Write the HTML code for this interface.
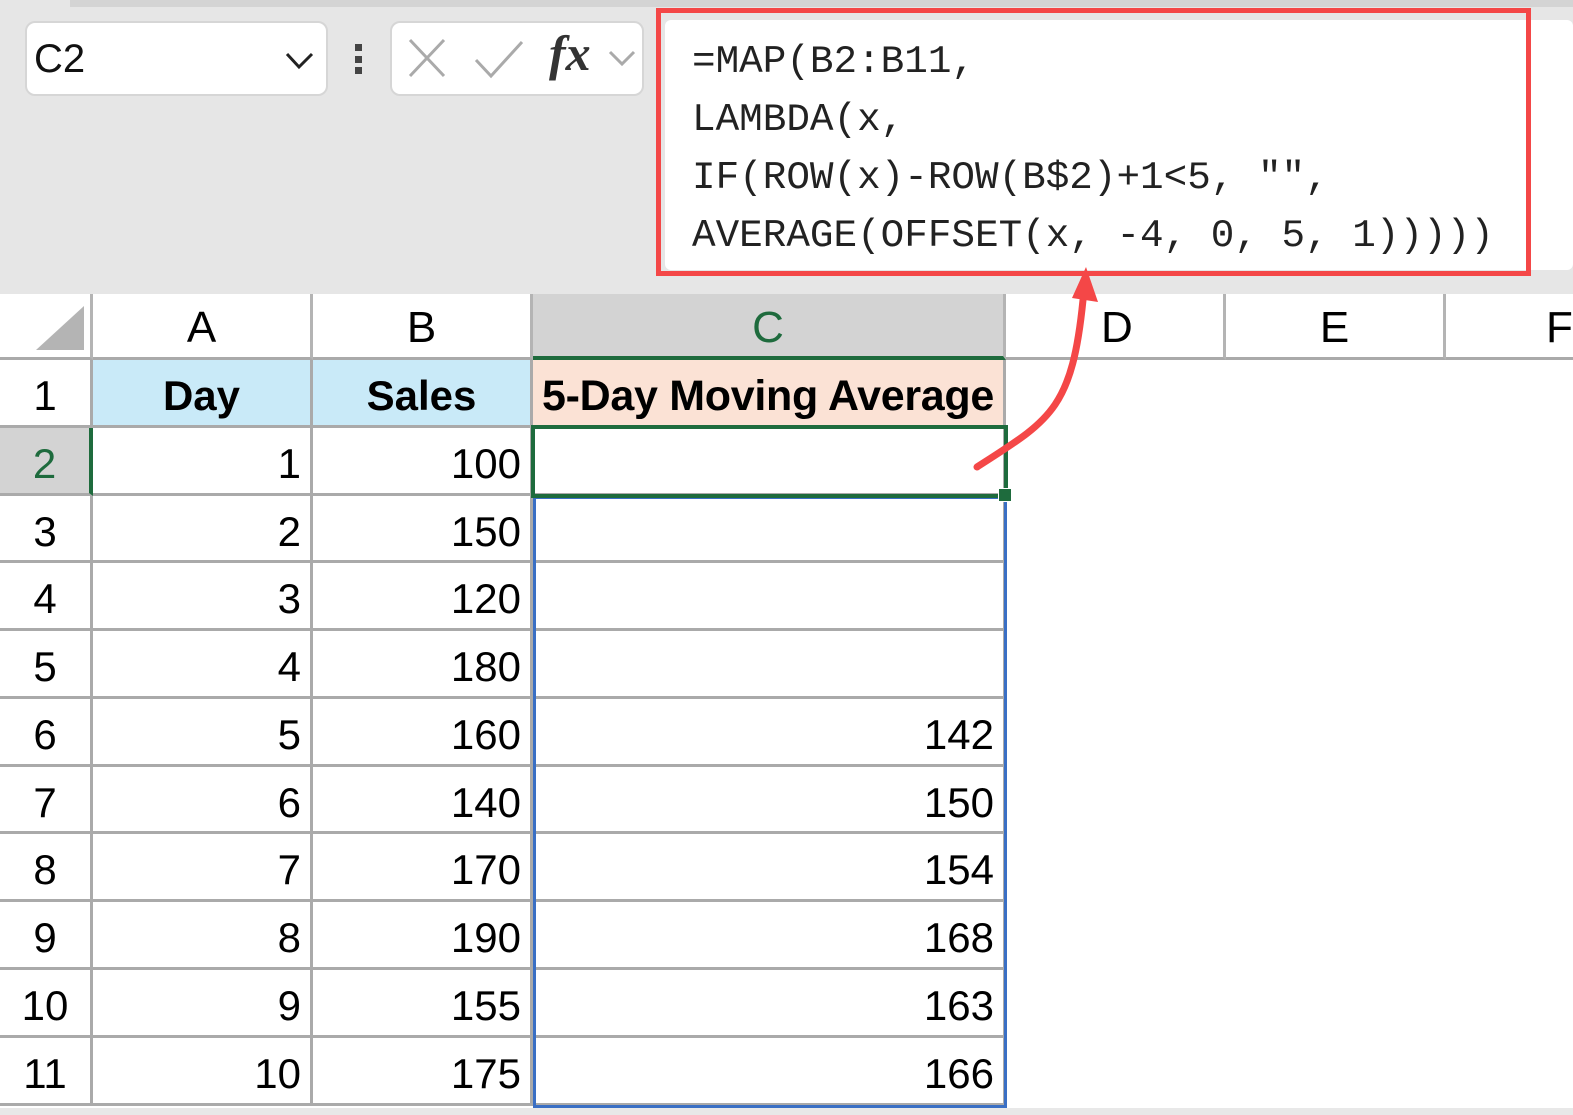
<!DOCTYPE html>
<html><head><meta charset="utf-8"><style>
*{margin:0;padding:0;box-sizing:border-box}
body{width:1573px;height:1115px;overflow:hidden;background:#fff;position:relative;font-family:"Liberation Sans",sans-serif;color:#000}
.a{position:absolute}
.top{left:0;top:0;width:1573px;height:294px;background:#e6e6e6}
.strip{left:70px;top:0;width:1503px;height:7px;background:#d4d4d4}
.box{background:#fff;border:2px solid #d6d6d6;border-radius:10px}
.hdr{top:294px;height:66px;border-right:3px solid #b4b4b4;border-bottom:3px solid #aaa;font-size:44px;text-align:center;line-height:68px;background:#fff}
.rh{left:0;width:93px;font-size:42px;text-align:center;border-bottom:3px solid #aaa;border-right:3px solid #aaa;background:#fff}
.c{border-bottom:3px solid #aaa;border-right:3px solid #aaa;font-size:42px;text-align:right;padding-right:9px}
.mono{font-family:"Liberation Mono",monospace;font-size:39.3px;color:#222;line-height:58px}
</style></head><body>
<div class="a top"></div>
<div class="a strip"></div>
<div class="a box" style="left:25px;top:21px;width:303px;height:75px"></div>
<div class="a" style="left:34px;top:37px;font-size:40px;color:#111">C2</div>
<svg class="a" style="left:284px;top:50px" width="32" height="22"><path d="M3 4 L15 17 L28 4" fill="none" stroke="#222" stroke-width="3"/></svg>
<div class="a" style="left:355px;top:44px;width:7px;height:7px;background:#444"></div>
<div class="a" style="left:355px;top:56px;width:7px;height:7px;background:#444"></div>
<div class="a" style="left:355px;top:67px;width:7px;height:7px;background:#444"></div>
<div class="a box" style="left:390px;top:21px;width:254px;height:75px"></div>
<svg class="a" style="left:400px;top:30px" width="240" height="60"><path d="M10 10 L44 46 M44 10 L10 46" stroke="#aaa" stroke-width="3" fill="none"/><path d="M76 30 L91 46 L122 12" stroke="#aaa" stroke-width="3" fill="none"/><path d="M210 22 L222 34 L234 22" stroke="#aaa" stroke-width="3" fill="none"/></svg>
<div class="a" style="left:549px;top:24px;font-family:'Liberation Serif',serif;font-style:italic;font-weight:bold;font-size:50px;color:#333">fx</div>
<div class="a" style="left:665px;top:20px;width:908px;height:250px;background:#fff;border-radius:6px"></div>
<div class="a mono" style="left:692px;top:33px">=MAP(B2:B11,<br>LAMBDA(x,<br>IF(ROW(x)-ROW(B$2)+1&lt;5, "",<br>AVERAGE(OFFSET(x, -4, 0, 5, 1)))))</div>
<div class="a" style="left:656px;top:8px;width:875px;height:268px;border:5px solid #f44747"></div>

<div class="a hdr" style="left:0;width:93px"></div>
<svg class="a" style="left:30px;top:304px" width="56" height="48"><path d="M6 46 L54 46 L54 2 Z" fill="#b4b4b4"/></svg>
<div class="a hdr" style="left:93px;width:220px">A</div>
<div class="a hdr" style="left:313px;width:220px">B</div>
<div class="a hdr" style="left:533px;width:473px;background:#d3d3d3;color:#1e6b3d;border-bottom:4px solid #1e6b3d">C</div>
<div class="a hdr" style="left:1006px;width:220px;text-align:left;padding-left:95px">D</div>
<div class="a hdr" style="left:1226px;width:220px">E</div>
<div class="a hdr" style="left:1446px;width:220px;text-align:left;padding-left:100px">F</div>

<div class="a rh" style="top:360px;height:68px;line-height:72px">1</div>
<div class="a c" style="left:93px;top:360px;width:220px;height:68px;background:#c9eaf8;text-align:center;font-weight:bold;line-height:72px;padding:0">Day</div>
<div class="a c" style="left:313px;top:360px;width:220px;height:68px;background:#c9eaf8;text-align:center;font-weight:bold;line-height:72px;padding:0">Sales</div>
<div class="a c" style="left:533px;top:360px;width:473px;height:68px;background:#fbe2d5;text-align:center;font-weight:bold;line-height:72px;padding:0;font-size:43px;letter-spacing:-0.3px;white-space:nowrap">5-Day Moving Average</div>

<div class="a rh" style="top:428px;height:68px;line-height:72px;background:#d3d3d3;color:#1e6b3d;border-right:4px solid #1e6b3d">2</div>
<div class="a c" style="left:93px;top:428px;width:220px;height:68px;line-height:72px">1</div>
<div class="a c" style="left:313px;top:428px;width:220px;height:68px;line-height:72px">100</div>
<div class="a c" style="left:533px;top:428px;width:473px;height:68px"></div>

<div class="a rh" style="top:496px;height:67px;line-height:72px">3</div>
<div class="a c" style="left:93px;top:496px;width:220px;height:67px;line-height:72px">2</div>
<div class="a c" style="left:313px;top:496px;width:220px;height:67px;line-height:72px">150</div>
<div class="a c" style="left:533px;top:496px;width:473px;height:67px"></div>

<div class="a rh" style="top:563px;height:68px;line-height:72px">4</div>
<div class="a c" style="left:93px;top:563px;width:220px;height:68px;line-height:72px">3</div>
<div class="a c" style="left:313px;top:563px;width:220px;height:68px;line-height:72px">120</div>
<div class="a c" style="left:533px;top:563px;width:473px;height:68px"></div>

<div class="a rh" style="top:631px;height:68px;line-height:72px">5</div>
<div class="a c" style="left:93px;top:631px;width:220px;height:68px;line-height:72px">4</div>
<div class="a c" style="left:313px;top:631px;width:220px;height:68px;line-height:72px">180</div>
<div class="a c" style="left:533px;top:631px;width:473px;height:68px"></div>

<div class="a rh" style="top:699px;height:68px;line-height:72px">6</div>
<div class="a c" style="left:93px;top:699px;width:220px;height:68px;line-height:72px">5</div>
<div class="a c" style="left:313px;top:699px;width:220px;height:68px;line-height:72px">160</div>
<div class="a c" style="left:533px;top:699px;width:473px;height:68px;line-height:72px">142</div>

<div class="a rh" style="top:767px;height:67px;line-height:72px">7</div>
<div class="a c" style="left:93px;top:767px;width:220px;height:67px;line-height:72px">6</div>
<div class="a c" style="left:313px;top:767px;width:220px;height:67px;line-height:72px">140</div>
<div class="a c" style="left:533px;top:767px;width:473px;height:67px;line-height:72px">150</div>

<div class="a rh" style="top:834px;height:68px;line-height:72px">8</div>
<div class="a c" style="left:93px;top:834px;width:220px;height:68px;line-height:72px">7</div>
<div class="a c" style="left:313px;top:834px;width:220px;height:68px;line-height:72px">170</div>
<div class="a c" style="left:533px;top:834px;width:473px;height:68px;line-height:72px">154</div>

<div class="a rh" style="top:902px;height:68px;line-height:72px">9</div>
<div class="a c" style="left:93px;top:902px;width:220px;height:68px;line-height:72px">8</div>
<div class="a c" style="left:313px;top:902px;width:220px;height:68px;line-height:72px">190</div>
<div class="a c" style="left:533px;top:902px;width:473px;height:68px;line-height:72px">168</div>

<div class="a rh" style="top:970px;height:68px;line-height:72px">10</div>
<div class="a c" style="left:93px;top:970px;width:220px;height:68px;line-height:72px">9</div>
<div class="a c" style="left:313px;top:970px;width:220px;height:68px;line-height:72px">155</div>
<div class="a c" style="left:533px;top:970px;width:473px;height:68px;line-height:72px">163</div>

<div class="a rh" style="top:1038px;height:68px;line-height:72px">11</div>
<div class="a c" style="left:93px;top:1038px;width:220px;height:68px;line-height:72px">10</div>
<div class="a c" style="left:313px;top:1038px;width:220px;height:68px;line-height:72px">175</div>
<div class="a c" style="left:533px;top:1038px;width:473px;height:68px;line-height:72px">166</div>

<div class="a" style="left:0;top:1108px;width:1573px;height:7px;background:#e8e8e8"></div>

<div class="a" style="left:533px;top:496px;width:474px;height:612px;border:3px solid #3a6fc4"></div>
<div class="a" style="left:531px;top:425px;width:477px;height:73px;border:4px solid #1e6b3d"></div>
<div class="a" style="left:998px;top:488px;width:14px;height:14px;background:#1e6b3d;border:1px solid #fff"></div>

<svg class="a" style="left:0;top:0" width="1573" height="1115">
<path d="M977 467 C1050 420 1072 410 1083 300" fill="none" stroke="#f44747" stroke-width="7" stroke-linecap="round"/>
<path d="M1072 298 L1086 267 L1098 302 Z" fill="#f44747"/>
</svg>
</body></html>
